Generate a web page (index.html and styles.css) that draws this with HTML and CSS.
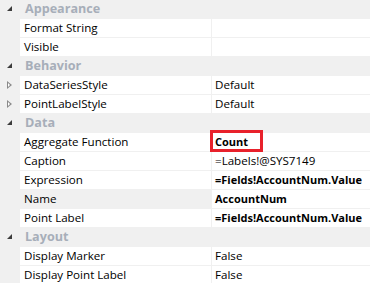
FILE: index.html
```html
<!DOCTYPE html>
<html>
<head>
<meta charset="utf-8">
<link rel="stylesheet" href="styles.css">
</head>
<body>
<div class="grid">
  <div class="row cat"><div class="gut"><span class="exp"></span></div><div class="cat-title">Appearance</div></div>
  <div class="row"><div class="gut"></div><div class="name">Format String</div><div class="val"></div></div>
  <div class="row"><div class="gut"></div><div class="name">Visible</div><div class="val"></div></div>
  <div class="row cat"><div class="gut"><span class="exp"></span></div><div class="cat-title">Behavior</div></div>
  <div class="row"><div class="gut"><span class="col"></span></div><div class="name">DataSeriesStyle</div><div class="val">Default</div></div>
  <div class="row"><div class="gut"><span class="col"></span></div><div class="name">PointLabelStyle</div><div class="val">Default</div></div>
  <div class="row cat"><div class="gut"><span class="exp"></span></div><div class="cat-title">Data</div></div>
  <div class="row"><div class="gut"></div><div class="name">Aggregate Function</div><div class="val bold">Count<span class="hl"></span></div></div>
  <div class="row"><div class="gut"></div><div class="name">Caption</div><div class="val">=Labels!@SYS7149</div></div>
  <div class="row"><div class="gut"></div><div class="name">Expression</div><div class="val bold">=Fields!AccountNum.Value</div></div>
  <div class="row sel"><div class="gut"></div><div class="name">Name</div><div class="val bold">AccountNum</div></div>
  <div class="row"><div class="gut"></div><div class="name">Point Label</div><div class="val bold">=Fields!AccountNum.Value</div></div>
  <div class="row cat"><div class="gut"><span class="exp"></span></div><div class="cat-title">Layout</div></div>
  <div class="row"><div class="gut"></div><div class="name">Display Marker</div><div class="val">False</div></div>
  <div class="row"><div class="gut"></div><div class="name">Display Point Label</div><div class="val">False</div></div>
</div>
</body>
</html>
```
FILE: styles.css
```css
html, body { margin: 0; padding: 0; background: #f0f0f0; }
body { font-family: "Open Sans", "Noto Sans", sans-serif; font-size: 11.6px; color: #000; }
.grid { width: 370px; display: flex; flex-direction: column; }
.row { display: flex; height: 18px; border-bottom: 1px solid #f0f0f0; background: #fff; line-height: 18px; white-space: nowrap; }
.row.cat { background: #f0f0f0; }
.gut { width: 20px; flex: none; background: #f0f0f0; position: relative; }
.name { width: 187px; flex: none; padding-left: 4px; overflow: hidden; }
.row.sel .name { background: #f0f0f0; }
.val { flex: 1; border-left: 1px solid #f0f0f0; padding-left: 3px; position: relative; }
.bold { font-weight: bold; font-size: 11px; }
.cat-title { padding-left: 5px; font-weight: bold; font-size: 12.6px; color: #a7aeb9; }
.exp { position: absolute; left: 7px; top: 6px; width: 0; height: 0; border-left: 5px solid transparent; border-bottom: 5px solid #3c3c3c; }
.col { position: absolute; left: 7px; top: 5px; width: 5px; height: 8px; }
.col::before { content: ""; position: absolute; left: 0; top: 0; width: 0; height: 0; border-top: 4px solid transparent; border-bottom: 4px solid transparent; border-left: 5px solid #8a8a8a; }
.col::after { content: ""; position: absolute; left: 1px; top: 2px; width: 0; height: 0; border-top: 2px solid transparent; border-bottom: 2px solid transparent; border-left: 2px solid #fff; }
.hl { position: absolute; left: -2px; top: -3px; width: 47px; height: 16px; border: 3px solid #e8212b; }
```
